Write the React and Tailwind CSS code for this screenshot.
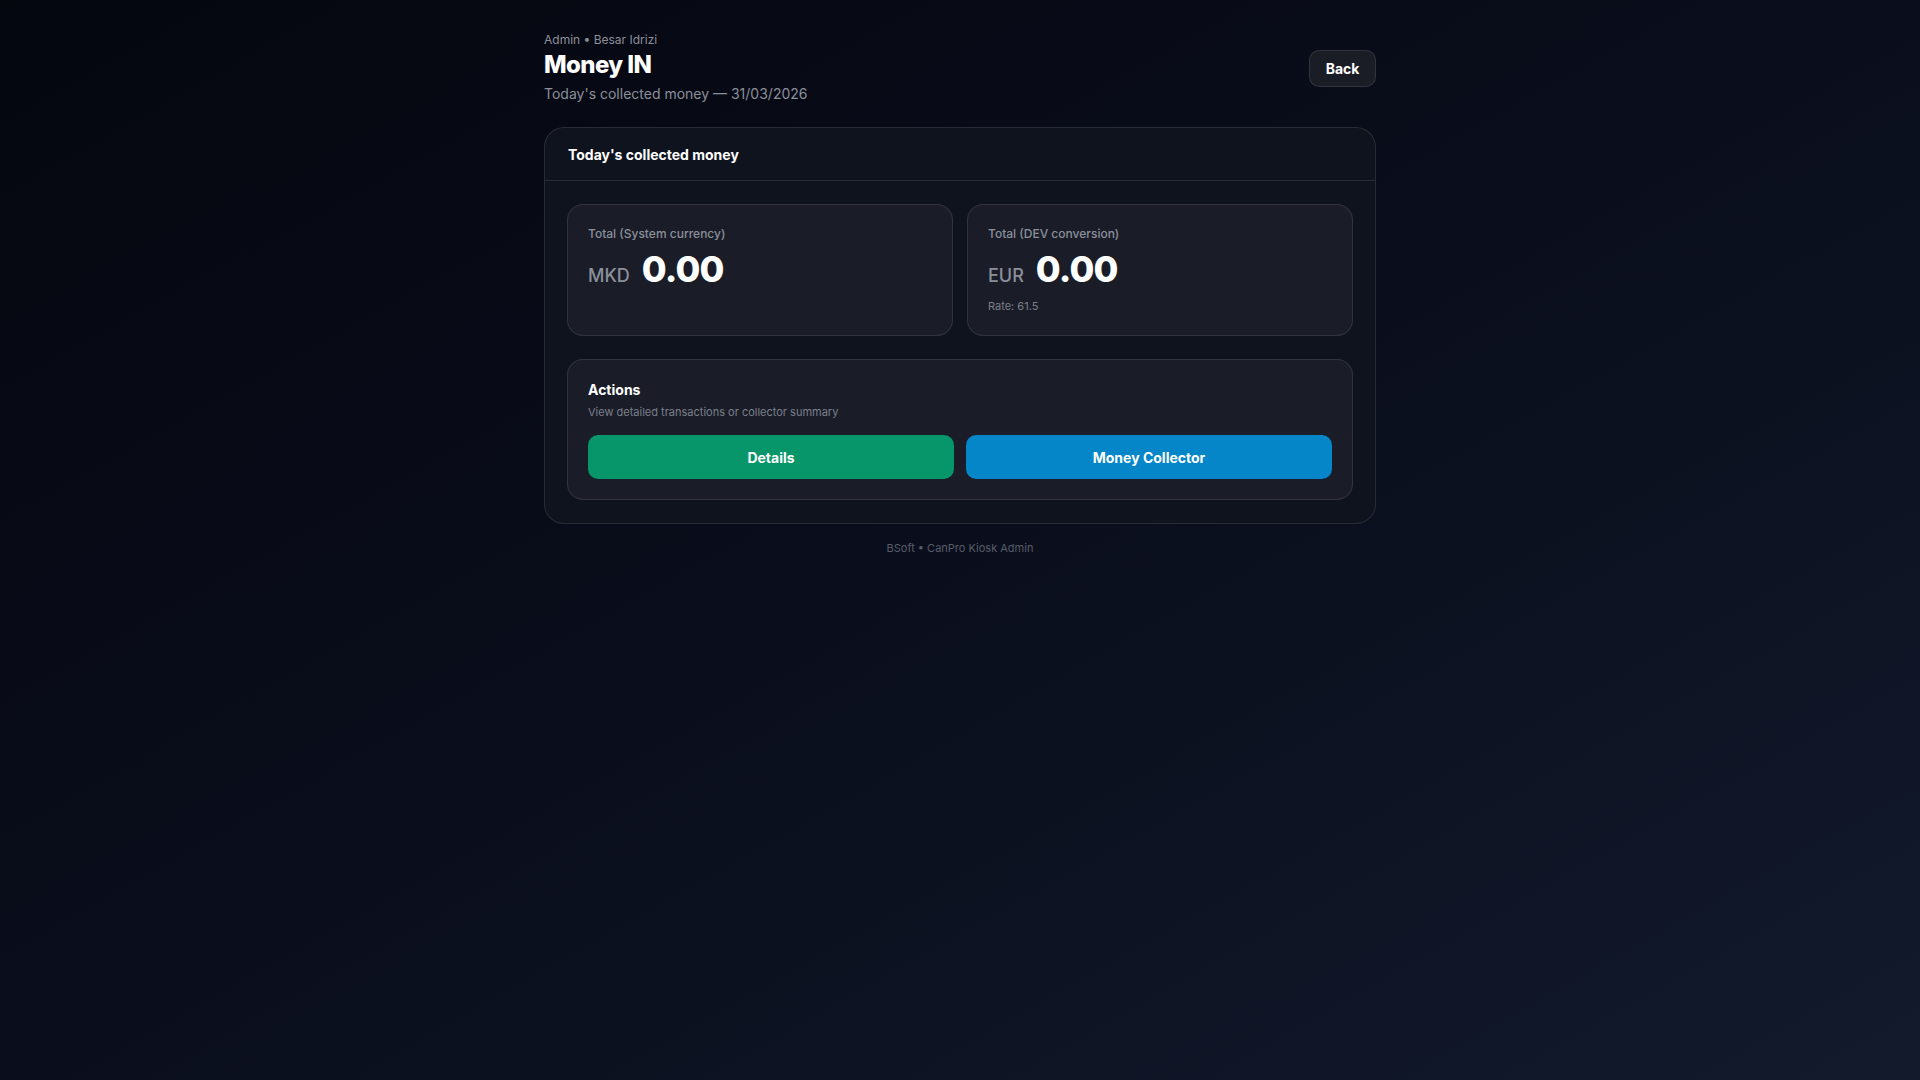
import React from 'react';

function StatCard({ label, currency, value, note }) {
  return (
    <div className="rounded-2xl border border-white/10 bg-[#1a1d28] px-5 pt-5 pb-[22px]">
      <p className="text-[12px] leading-[18px] font-medium text-[#8b8f9a]">{label}</p>
      <div className="mt-[4px] flex items-baseline gap-3">
        <span className="text-[18px] font-medium text-[#8b8f9a]">{currency}</span>
        <span className="text-[36px] leading-[44px] font-extrabold text-white tracking-tight">{value}</span>
      </div>
      {note && <p className="mt-[8px] text-[11px] leading-[14px] text-[#7b7f8a]">{note}</p>}
    </div>
  );
}

export default function App() {
  return (
    <div
      className="min-h-screen w-full bg-gradient-to-br from-[#05070f] via-[#0a0e1c] to-[#121a2c] pt-8"
      style={{ fontFamily: 'Inter, "Noto Sans", sans-serif' }}
    >
      <div className="mx-auto w-[832px]">
        <div className="flex items-center justify-between">
          <div>
            <p className="text-[12px] leading-4 text-[#8b8f9a]">Admin • Besar Idrizi</p>
            <h1 className="mt-[2px] text-[24px] leading-[30px] font-extrabold text-white tracking-tight">Money IN</h1>
            <p className="mt-[4px] text-[14px] leading-5 text-[#8b8f9a]">Today's collected money — 31/03/2026</p>
          </div>
          <button className="h-[37px] w-[67px] rounded-[10px] border border-white/10 bg-[#1a1d26] text-[14px] font-bold text-white">
            Back
          </button>
        </div>

        <div className="mt-[23px] rounded-[20px] border border-white/10 bg-[#0f131d]">
          <div className="border-b border-white/10 px-[23px] h-[53px] flex items-center">
            <h2 className="text-[14px] font-bold text-white">Today's collected money</h2>
          </div>
          <div className="px-[22px] pt-[23px] pb-[23px]">
            <div className="grid grid-cols-2 gap-[14px]">
              <StatCard label="Total (System currency)" currency="MKD" value="0.00" />
              <StatCard label="Total (DEV conversion)" currency="EUR" value="0.00" note="Rate: 61.5" />
            </div>
            <div className="mt-[23px] rounded-2xl border border-white/10 bg-[#1a1d28] px-5 pt-[21px] pb-5">
              <h3 className="text-[14px] leading-[18px] font-bold text-white">Actions</h3>
              <p className="mt-[5px] text-[11px] leading-4 text-[#7b7f8a]">View detailed transactions or collector summary</p>
              <div className="mt-[15px] grid grid-cols-2 gap-3">
                <button className="h-[44px] rounded-[10px] bg-[#079669] text-[14px] font-bold text-white">Details</button>
                <button className="h-[44px] rounded-[10px] bg-[#0486c8] text-[14px] font-bold text-white">Money Collector</button>
              </div>
            </div>
          </div>
        </div>

        <p className="mt-4 text-center text-[11px] text-[#575c68]">BSoft • CanPro Kiosk Admin</p>
      </div>
    </div>
  );
}
